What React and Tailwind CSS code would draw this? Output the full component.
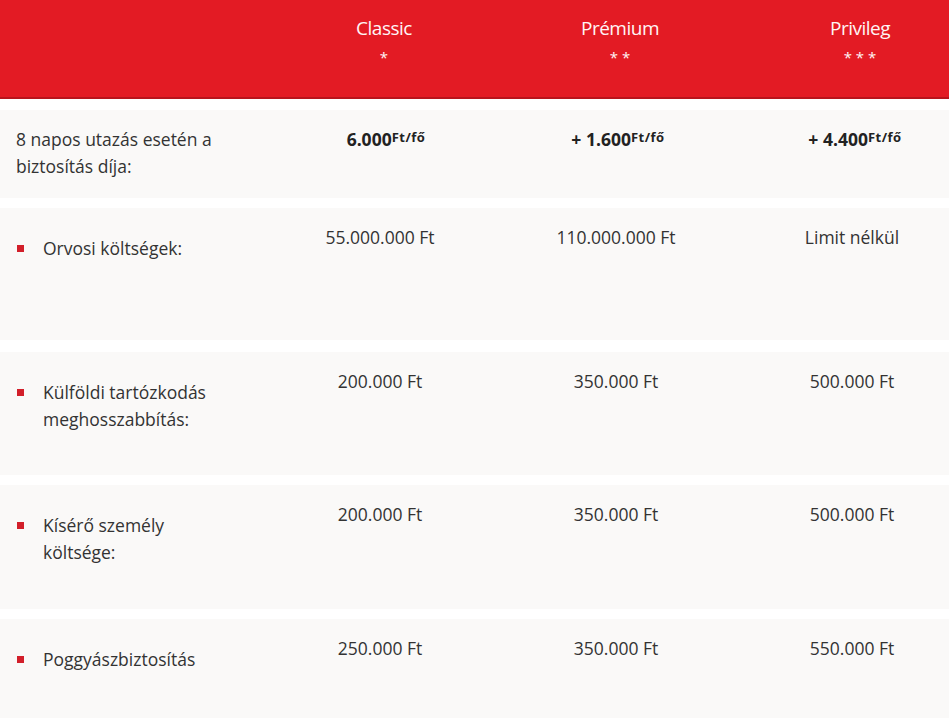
import React from "react";

const plans = [
  { name: "Classic", stars: "*", pad: "pl-2" },
  { name: "Prémium", stars: "* *", pad: "pl-2" },
  { name: "Privileg", stars: "* * *", pad: "pl-[16px]" },
];

const rows = [
  { label: "Külföldi tartózkodás meghosszabbítás:", values: ["200.000 Ft", "350.000 Ft", "500.000 Ft"], h: "h-[123px]" },
  { label: "Kísérő személy költsége:", values: ["200.000 Ft", "350.000 Ft", "500.000 Ft"], h: "h-[124px]" },
  { label: "Poggyászbiztosítás", values: ["250.000 Ft", "350.000 Ft", "550.000 Ft"], h: "h-[110px]" },
];

function Price({ plus, amount }) {
  return (
    <span className="font-bold text-[#222]">
      {plus ? "+ " : ""}
      {amount}
      <sup className="text-[13px] relative -top-[4px] tracking-[0.5px]">Ft/fő</sup>
    </span>
  );
}

function ListRow({ label, values, h }) {
  return (
    <div className={`grid grid-cols-[262px_236px_236px_236px] bg-[#faf9f8] ${h}`}>
      <div className="pl-[17px] pt-[27px] flex items-start">
        <span className="w-[7px] h-[7px] bg-[#d21f2a] mt-[10px] shrink-0" />
        <span className="ml-[19px] w-[190px]">{label}</span>
      </div>
      {values.map((v, i) => (
        <div key={i} className="pt-4 text-center">
          {v}
        </div>
      ))}
    </div>
  );
}

export default function App() {
  return (
    <div className="w-[949px] h-[718px] overflow-hidden bg-white text-[17.5px] leading-[27px] text-[#333]" style={{ fontFamily: '"Open Sans", "Noto Sans", sans-serif' }}>
      <div className="w-[970px]">
        <div className="h-[99px] bg-[#e31b24] border-b-2 border-[#b8141c] grid grid-cols-[262px_236px_236px_236px] text-[#fff5f5]">
          <div />
          {plans.map((p) => (
            <div key={p.name} className={`${p.pad} pt-[15px] text-center`}>
              <div className="text-[19px] leading-[26px] tracking-[-0.5px]">{p.name}</div>
              <div className="text-[15px] leading-[20px] mt-[6px] tracking-[0px]">{p.stars}</div>
            </div>
          ))}
        </div>

        <div className="mt-[11px] flex flex-col gap-[10px]">
          <div className="grid grid-cols-[262px_236px_236px_236px] bg-[#faf9f8] h-[88px]">
            <div className="pl-4 pt-4 w-[240px]">8 napos utazás esetén a biztosítás díja:</div>
            <div className="pt-4 text-center pl-[12px]">
              <Price amount="6.000" />
            </div>
            <div className="pt-4 text-center pl-[4px]">
              <Price plus amount="1.600" />
            </div>
            <div className="pt-4 text-center pl-[6px]">
              <Price plus amount="4.400" />
            </div>
          </div>

          <div className="grid grid-cols-[262px_236px_236px_236px] bg-[#faf9f8] h-[132px] mb-[2px]">
            <div className="pl-[17px] pt-[27px] flex items-start">
              <span className="w-[7px] h-[7px] bg-[#d21f2a] mt-[10px] shrink-0" />
              <span className="ml-[19px]">Orvosi költségek:</span>
            </div>
            <div className="pt-4 text-center">55.000.000 Ft</div>
            <div className="pt-4 text-center">110.000.000 Ft</div>
            <div className="pt-4 text-center">Limit nélkül</div>
          </div>

          {rows.map((r) => (
            <ListRow key={r.label} {...r} />
          ))}
        </div>
      </div>
    </div>
  );
}
